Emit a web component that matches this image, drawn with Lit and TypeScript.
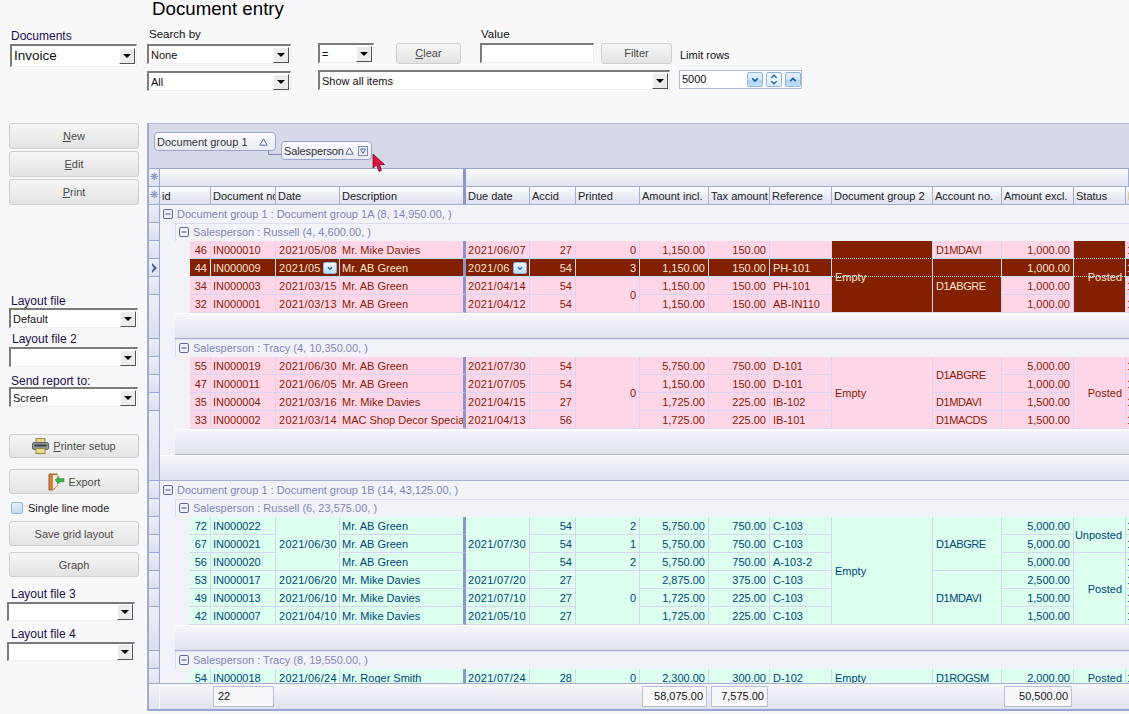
import { LitElement, html, css, svg, nothing } from 'lit';
import { customElement } from 'lit/decorators.js';

type Merged = { t: string; span: number; sel?: boolean };
type Cell = string | Merged | null;
type Sub = { title: string; tone: 'pink' | 'green'; rows: Cell[][]; footer: boolean };
type Group = { title: string; subs: Sub[]; footer: boolean };

const m = (t: string, span: number, sel = false): Merged => ({ t, span, sel });

// columns that are right aligned in the data rows
const RIGHT = new Set([0, 5, 6, 7, 8, 12, 13]);
const SELECTED_ID = '44';

const groups: Group[] = [
  {
    title: 'Document group 1 : Document group 1A (8, 14,950.00, )',
    footer: true,
    subs: [
      {
        title: 'Salesperson : Russell (4, 4,600.00, )',
        tone: 'pink',
        footer: true,
        rows: [
          ['46', 'IN000010', '2021/05/08', 'Mr. Mike Davies', '2021/06/07', '27', '0', '1,150.00', '150.00', '', m('Empty', 4, true), 'D1MDAVI', '1,000.00', m('Posted', 4, true), '1'],
          ['44', 'IN000009', '2021/05', 'Mr. AB Green', '2021/06', '54', '3', '1,150.00', '150.00', 'PH-101', null, m('D1ABGRE', 3, true), '1,000.00', null, '1'],
          ['34', 'IN000003', '2021/03/15', 'Mr. AB Green', '2021/04/14', '54', m('0', 2), '1,150.00', '150.00', 'PH-101', null, null, '1,000.00', null, '1'],
          ['32', 'IN000001', '2021/03/13', 'Mr. AB Green', '2021/04/12', '54', null, '1,150.00', '150.00', 'AB-IN110', null, null, '1,000.00', null, '1'],
        ],
      },
      {
        title: 'Salesperson : Tracy (4, 10,350.00, )',
        tone: 'pink',
        footer: true,
        rows: [
          ['55', 'IN000019', '2021/06/30', 'Mr. AB Green', '2021/07/30', '54', m('0', 4), '5,750.00', '750.00', 'D-101', m('Empty', 4), m('D1ABGRE', 2), '5,000.00', m('Posted', 4), '1'],
          ['47', 'IN000011', '2021/06/05', 'Mr. AB Green', '2021/07/05', '54', null, '1,150.00', '150.00', 'D-101', null, null, '1,000.00', null, '1'],
          ['35', 'IN000004', '2021/03/16', 'Mr. Mike Davies', '2021/04/15', '27', null, '1,725.00', '225.00', 'IB-102', null, 'D1MDAVI', '1,500.00', null, '1'],
          ['33', 'IN000002', '2021/03/14', 'MAC Shop Decor Special', '2021/04/13', '56', null, '1,725.00', '225.00', 'IB-101', null, 'D1MACDS', '1,500.00', null, '1'],
        ],
      },
    ],
  },
  {
    title: 'Document group 1 : Document group 1B (14, 43,125.00, )',
    footer: false,
    subs: [
      {
        title: 'Salesperson : Russell (6, 23,575.00, )',
        tone: 'green',
        footer: true,
        rows: [
          ['72', 'IN000022', m('2021/06/30', 3), 'Mr. AB Green', m('2021/07/30', 3), '54', '2', '5,750.00', '750.00', 'C-103', m('Empty', 6), m('D1ABGRE', 3), '5,000.00', m('Unposted', 2), '1'],
          ['67', 'IN000021', null, 'Mr. AB Green', null, '54', '1', '5,750.00', '750.00', 'C-103', null, null, '5,000.00', null, '1'],
          ['56', 'IN000020', null, 'Mr. AB Green', null, '54', '2', '5,750.00', '750.00', 'A-103-2', null, null, '5,000.00', m('Posted', 4), '1'],
          ['53', 'IN000017', '2021/06/20', 'Mr. Mike Davies', '2021/07/20', '27', m('0', 3), '2,875.00', '375.00', 'C-103', null, m('D1MDAVI', 3), '2,500.00', null, '1'],
          ['49', 'IN000013', '2021/06/10', 'Mr. Mike Davies', '2021/07/10', '27', null, '1,725.00', '225.00', 'C-103', null, null, '1,500.00', null, '1'],
          ['42', 'IN000007', '2021/04/10', 'Mr. Mike Davies', '2021/05/10', '27', null, '1,725.00', '225.00', 'C-103', null, null, '1,500.00', null, '1'],
        ],
      },
      {
        title: 'Salesperson : Tracy (8, 19,550.00, )',
        tone: 'green',
        footer: false,
        rows: [
          ['54', 'IN000018', '2021/06/24', 'Mr. Roger Smith', '2021/07/24', '28', '0', '2,300.00', '300.00', 'D-102', 'Empty', 'D1ROGSM', '2,000.00', 'Posted', '1'],
        ],
      },
    ],
  },
];

const headers = ['id', 'Document no', 'Date', 'Description', 'Due date', 'Accid', 'Printed', 'Amount incl.', 'Tax amount', 'Reference', 'Document group 2', 'Account no.', 'Amount excl.', 'Status', 'Paid'];

const chevronDown = svg`<path d="M3.5 5 L6 7.5 L8.5 5" fill="none" stroke="#1d5fa8" stroke-width="1.5"/>`;
const chevronUp = svg`<path d="M3.5 7.5 L6 5 L8.5 7.5" fill="none" stroke="#1d5fa8" stroke-width="1.5"/>`;

@customElement('app-root')
export class AppRoot extends LitElement {
  static styles = css`
    :host {
      display: block;
      width: 1129px;
      height: 714px;
      overflow: hidden;
      background: #f8f8fb;
      font: 11px/14px 'Liberation Sans', Arial, sans-serif;
      color: #111;
    }
    * { box-sizing: border-box; }

    /* top filter area */
    .top { height: 123px; }
    .title { height: 24px; padding-left: 152px; font-size: 18.7px; line-height: 18px; color: #000; }
    .filters {
      display: grid;
      padding-left: 10px;
      grid-template-columns: 137px 171px 78px 84px 121px 78px 1fr;
      grid-template-rows: 19px 27px 24px;
    }
    .lbl { color: #20104a; font-size: 12px; }
    .filters .lbl { padding-left: 1px; }
    .docs-lbl { grid-column: 1; grid-row: 1; padding-top: 5px; }
    .docs-sel { grid-column: 1; grid-row: 2 / span 2; margin-top: 1px; }
    .search-lbl { grid-column: 2; grid-row: 1; padding: 3px 0 0 2px; font-size: 11.5px; }
    .search-sel { grid-column: 2; grid-row: 2; margin-top: 1px; }
    .all-sel { grid-column: 2; grid-row: 3; margin-top: 1px; }
    .op-sel { grid-column: 3; grid-row: 2; }
    .show-sel { grid-column: 3 / span 4; grid-row: 3; }
    .clear-btn { grid-column: 4; grid-row: 2; width: 65px; height: 21px; padding-bottom: 1px; }
    .value-lbl { grid-column: 5; grid-row: 1; padding: 3px 0 0 1px; font-size: 11.5px; }
    .value-input { grid-column: 5; grid-row: 2; width: 114px; height: 20px; }
    .filter-btn { grid-column: 6; grid-row: 2; width: 71px; height: 21px; padding-bottom: 1px; }
    .limit-lbl { grid-column: 7; grid-row: 2; padding: 5px 0 0 1px; }
    .spin { grid-column: 7; grid-row: 3; }

    .select {
      display: flex;
      align-items: center;
      height: 20px;
      border-style: solid;
      border-width: 2px 1px 1px 2px;
      border-color: #7b7b7b #f0f0f0 #f0f0f0 #7b7b7b;
      background: #fff;
      padding-left: 2px;
      color: #111;
    }
    .select span { flex: 1; overflow: hidden; white-space: nowrap; }
    .select i {
      width: 16px;
      height: 16px;
      margin-right: 1px;
      display: flex;
      align-items: center;
      justify-content: center;
      background: #ececec;
      border-style: solid;
      border-width: 1px;
      border-color: #fff #555 #555 #fff;
    }
    .select i::after {
      content: '';
      border-style: solid;
      border-width: 4px 4px 0;
      border-color: #000 transparent transparent;
    }
    .w-docs { width: 127px; height: 23px; font-size: 13.5px; }
    .w-search { width: 144px; }
    .w-op { width: 56px; }
    .w-show { width: 352px; }
    .w-side { width: 129px; }
    .w-side2 { width: 128px; height: 19px; margin-left: -2px; }

    .btn {
      display: flex;
      align-items: center;
      justify-content: center;
      gap: 4px;
      border: 1px solid #cfcfcf;
      border-radius: 3px;
      background: linear-gradient(#f6f6f6, #e3e3e3);
      color: #4c4c4c;
    }
    .value-input { border-style: solid; border-width: 2px 1px 1px 2px; border-color: #7b7b7b #eee #eee #7b7b7b; background: #fff; }

    .spin {
      display: flex;
      align-items: center;
      width: 123px;
      height: 19px;
      border: 1px solid #b6bddb;
      background: #fff;
      padding-left: 1px;
      gap: 3px;
    }
    .spin span { width: 64px; padding: 0 0 1px 1px; }
    .spin b {
      display: block;
      width: 16px;
      height: 15px;
      border: 1px solid #8db6de;
      border-radius: 2px;
      background: linear-gradient(#e4f1fd 0, #cfe4f9 50%, #b0d4f5 50%, #c4e0f9 100%);
    }
    .spin b.mid { background: linear-gradient(#f4f9fe, #dcebfa); }
    .spin svg { display: block; width: 14px; height: 13px; }

    /* main */
    .main { display: flex; height: 591px; }
    .side { width: 147px; padding-left: 9px; display: flex; flex-direction: column; flex: none; }
    .side .btn { width: 130px; height: 26px; flex: none; }
    .gap-2 { margin-top: 2px; }
    .side .bt24 { height: 24px; margin-top: 27px; }
    .side .bt-export { height: 25px; margin-top: 11px; }
    .side .bt-save { height: 25px; margin-top: 7px; }
    .side .bt-graph { height: 25px; margin-top: 6px; }
    .l1 { margin-top: 89px; padding-left: 2px; }
    .l2 { margin-top: 4px; margin-bottom: 1px; padding-left: 3px; }
    .l3 { margin-top: 7px; margin-bottom: -1px; padding-left: 2px; }
    .l4 { margin-top: 10px; margin-bottom: 1px; padding-left: 2px; }
    .l5 { margin-top: 6px; margin-bottom: 1px; padding-left: 2px; }
    .check { display: flex; align-items: center; gap: 5px; height: 12px; margin: 8px 0 0 2px; color: #222; }
    .check i {
      width: 12px;
      height: 12px;
      border: 1px solid #8fb2d6;
      border-radius: 2px;
      background: linear-gradient(#e6f0fa, #c4dcf4);
    }

    /* grid panel */
    .panel {
      width: 982px;
      height: 588px;
      flex: none;
      border-top: 1px solid #b3b9d4;
      border-left: 2px solid #a3abd0;
      border-bottom: 2px solid #9aa5cf;
      background: #f2f3f9;
      display: flex;
      flex-direction: column;
      overflow: hidden;
    }
    .groupby {
      position: relative;
      height: 44px;
      flex: none;
      display: flex;
      align-items: flex-start;
      gap: 5px;
      padding: 8px 0 0 5px;
      background: #d6d9e8;
    }
    .gb {
      display: flex;
      align-items: center;
      height: 19px;
      border: 1px solid #9aa5cf;
      border-radius: 4px;
      background: linear-gradient(#fbfbfe, #e9ebf5);
      padding-left: 2px;
      color: #333;
    }
    .gb svg { display: block; flex: none; }
    .gb1 { width: 122px; justify-content: space-between; padding-right: 7px; }
    .gb2 { width: 91px; margin-top: 9px; justify-content: space-between; padding-right: 3px; }
    .gb2 > span:first-child { letter-spacing: -.12px; }
    .gb-tools { display: flex; gap: 4px; align-items: center; }
    .link {
      position: absolute;
      left: 119px;
      top: 26px;
      width: 13px;
      height: 5px;
      border-left: 1px solid #7e8ac2;
      border-bottom: 1px solid #7e8ac2;
    }
    .cursor { position: absolute; left: 223px; top: 29px; }

    .bar {
      display: flex;
      flex: none;
      height: 19px;
      border-top: 1px solid #9aa7d3;
    }
    .hrow { height: 18px; border-top: 0; }
    .star {
      width: 11px;
      flex: none;
      border-right: 1px solid #9aa7d3;
      border-bottom: 1px solid #9aa7d3;
      background: linear-gradient(#f5f6fb, #dde0ee);
      color: #7f8ac0;
      font-size: 10px;
      line-height: 16px;
      text-align: center;
      overflow: hidden;
    }
    .band {
      background: linear-gradient(#fcfcfe, #dfe2ee);
      border-right: 1px solid #a3aed6;
      border-bottom: 1px solid #a3aed6;
    }
    .band1 { width: 306px; flex: none; border-right: 3px solid #8b96c5; }
    .band2 { flex: 1; min-width: 0; }
    .cols {
      display: grid;
      grid-template-columns: 51px 65px 64px 126px 64px 46px 64px 69px 61px 62px 101px 69px 72px 52px 60px;
    }
    .hcell {
      height: 18px;
      padding: 0 0 0 2px;
      background: linear-gradient(#fcfcfe, #dce0ee);
      border-right: 1px solid #a3aed6;
      border-bottom: 1px solid #a3aed6;
      line-height: 18px;
      white-space: nowrap;
      overflow: hidden;
      color: #222;
    }
    .hcell.split { border-right: 3px solid #8b96c5; }

    .body { flex: 1; display: flex; min-height: 0; overflow: hidden; }
    .ind { width: 11px; flex: none; }
    .ind div {
      display: flex;
      align-items: center;
      justify-content: center;
      border-right: 1px solid #9aa7d3;
      border-bottom: 1px solid #9aa7d3;
      background: linear-gradient(#eceef6, #dcdfec);
    }
    .content { flex: 1; min-width: 0; }
    .grow { height: 18px; display: flex; align-items: center; gap: 4px; padding-left: 3px; color: #7f87bb; white-space: nowrap; }
    .grow svg { display: block; flex: none; }
    .srow { margin-left: 15px; border-left: 1px solid #dcdcf2; border-top: 1px solid #dcdcf2; height: 18px; padding-bottom: 1px; }
    .rows {
      position: relative;
      margin-left: 30px;
      display: grid;
      grid-template-columns: 21px 65px 64px 126px 64px 46px 64px 69px 61px 62px 101px 69px 72px 52px 60px;
      grid-auto-rows: 18px;
    }
    .cell {
      display: flex;
      align-items: center;
      padding: 0 2px 0 2px;
      border-right: 1px solid #d6d6f2;
      border-bottom: 1px solid #d6d6f2;
      white-space: nowrap;
      overflow: hidden;
      min-width: 0;
    }
    .cell span { flex: 1; min-width: 0; overflow: hidden; }
    .right { justify-content: flex-end; text-align: right; padding-right: 3px; }
    .c2 { padding-left: 3px; letter-spacing: .28px; }
    .c4 { letter-spacing: .28px; }
    .c9, .c10 { padding-left: 3px; }
    .c11 { padding-left: 3px; letter-spacing: -.4px; }
    .c14 { padding-left: 1px; }
    .pink .cell { background: #ffd6e8; color: #8a1a05; }
    .green .cell { background: #dcffee; color: #00467a; }
    .rows .cell.sel { background: #832000; color: #fbe3d6; }
    .rows .cell.active { border-right-color: #fff; }
    .split { border-right: 3px solid #8b96c5; }
    .dd {
      flex: none;
      display: block;
      width: 14px;
      height: 12px;
      border: 1px solid #8fb6dc;
      border-radius: 2px;
      background: linear-gradient(#f2f8fe, #bcd9f5);
    }
    .dd svg { display: block; width: 12px; height: 10px; }
    .focus {
      position: absolute;
      left: 0;
      top: 17px;
      right: 0;
      height: 19px;
      border-top: 1px dotted #9ff0f5;
      border-bottom: 1px dotted #9ff0f5;
      pointer-events: none;
    }
    .foot {
      height: 26px;
      margin-left: 15px;
      background: linear-gradient(#f6f7fb, #dfe2ee);
      border-top: 1px solid #fff;
      border-bottom: 1px solid #a9b0d2;
    }
    .foot.top { margin-left: 0; }

    .sum {
      flex: none;
      height: 26px;
      display: flex;
      border-top: 1px solid #a3abd0;
    }
    .sum-ind { width: 11px; flex: none; background: linear-gradient(#f2f3f9, #dfe2ee); border-right: 1px solid #f8f8fb; }
    .sum .cols { flex: 1; background: linear-gradient(#f8f8fb, #dfe2ee); padding-top: 2px; }
    .tot {
      height: 21px;
      margin: 0 2px;
      border: 1px solid #b9c0dc;
      background: #f8f8fb;
      line-height: 19px;
      padding: 0 3px 0 2px;
      color: #111;
      text-align: right;
    }
    .tot.first { grid-column: 2; text-align: left; padding-left: 4px; }
    .tot.t8 { grid-column: 8; }
    .tot.t9 { grid-column: 9; }
    .tot.t13 { grid-column: 13; }
  `;

  private sel(text: string, cls: string) {
    return html`<div class="select ${cls}"><span>${text}</span><i></i></div>`;
  }

  private expander() {
    return html`<svg width="10" height="10" viewBox="0 0 10 10"><rect x=".5" y=".5" width="9" height="9" rx="1.5" fill="#eef0f8" stroke="#5f6897"/><path d="M2.5 5h5" stroke="#3d4575"/></svg>`;
  }

  private triangle() {
    return html`<svg width="9" height="8" viewBox="0 0 9 8"><path d="M4.5 .8 L8.2 7.2 H.8 Z" fill="none" stroke="#5b67a8"/></svg>`;
  }

  private renderCell(c: Cell, col: number, row: number, rowId: string) {
    if (c === null) return nothing;
    const merged = typeof c === 'object';
    const text = merged ? (c as Merged).t : (c as string);
    const span = merged ? (c as Merged).span : 1;
    const selected = rowId === SELECTED_ID || (merged && (c as Merged).sel);
    const withDrop = rowId === SELECTED_ID && (col === 2 || col === 4);
    const cls = [
      'cell',
      `c${col}`,
      RIGHT.has(col) ? 'right' : '',
      selected ? 'sel' : '',
      col === 3 ? 'split' : '',
      selected && col === 0 ? 'active' : '',
    ].join(' ');
    return html`<div class=${cls} style="grid-column:${col + 1};grid-row:${row + 1} / span ${span}">
      ${withDrop
        ? html`<span>${text}</span><b class="dd"><svg viewBox="0 0 12 12">${chevronDown}</svg></b>`
        : text}
    </div>`;
  }

  private renderSub(s: Sub) {
    const selected = s.rows.some((r) => r[0] === SELECTED_ID);
    return html`
      <div class="grow srow">${this.expander()}<span>${s.title}</span></div>
      <div class="rows ${s.tone}">
        ${s.rows.map((r, ri) => r.map((c, ci) => this.renderCell(c, ci, ri, r[0] as string)))}
        ${selected ? html`<div class="focus"></div>` : nothing}
      </div>
      ${s.footer ? html`<div class="foot"></div>` : nothing}
    `;
  }

  // row selector column, the last row of a block also covers the footers below it
  private indicators() {
    const items: { h: number; id?: string }[] = [];
    for (const g of groups) {
      items.push({ h: 18 });
      for (const s of g.subs) {
        items.push({ h: 18 });
        for (const r of s.rows) items.push({ h: 18, id: r[0] as string });
        if (s.footer) items[items.length - 1].h += 26;
      }
      if (g.footer) items[items.length - 1].h += 26;
    }
    return items.map(
      (i) => html`<div style="height:${i.h}px">
        ${i.id === SELECTED_ID
          ? html`<svg width="7" height="10" viewBox="0 0 7 10"><path d="M1 0 L6 5 L1 10 L1 7.5 L3 5 L1 2.5 Z" fill="#4d5c9e"/></svg>`
          : nothing}
      </div>`
    );
  }

  private renderTop() {
    return html`
      <div class="top">
        <div class="title">Document entry</div>
        <div class="filters">
          <div class="lbl docs-lbl">Documents</div>
          <div class="docs-sel">${this.sel('Invoice', 'w-docs')}</div>
          <div class="search-lbl">Search by</div>
          <div class="search-sel">${this.sel('None', 'w-search')}</div>
          <div class="all-sel">${this.sel('All', 'w-search')}</div>
          <div class="op-sel">${this.sel('=', 'w-op')}</div>
          <div class="show-sel">${this.sel('Show all items', 'w-show')}</div>
          <div class="btn clear-btn"><span><u>C</u>lear</span></div>
          <div class="value-lbl">Value</div>
          <div class="value-input"></div>
          <div class="btn filter-btn">Filter</div>
          <div class="limit-lbl">Limit rows</div>
          <div class="spin">
            <span>5000</span>
            <b><svg viewBox="0 0 12 12">${chevronDown}</svg></b>
            <b class="mid"><svg viewBox="0 0 12 12"><path d="M3.5 4.5 L6 2 L8.5 4.5 M3.5 7.5 L6 10 L8.5 7.5" fill="none" stroke="#1d5fa8" stroke-width="1.3"/></svg></b>
            <b><svg viewBox="0 0 12 12">${chevronUp}</svg></b>
          </div>
        </div>
      </div>
    `;
  }

  private renderSide() {
    return html`
      <div class="side">
        <div class="btn"><span><u>N</u>ew</span></div>
        <div class="btn gap-2"><span><u>E</u>dit</span></div>
        <div class="btn gap-2"><span><u>P</u>rint</span></div>
        <div class="lbl l1">Layout file</div>
        ${this.sel('Default', 'w-side')}
        <div class="lbl l2">Layout file 2</div>
        ${this.sel('', 'w-side')}
        <div class="lbl l3">Send report to:</div>
        ${this.sel('Screen', 'w-side')}
        <div class="btn bt24">
          <svg width="17" height="16" viewBox="0 0 17 16">
            <rect x="4" y="0.5" width="9" height="5" fill="#e4d48c" stroke="#9a8b4a"/>
            <rect x="0.5" y="4.5" width="16" height="7" rx="1.5" fill="#8f959c" stroke="#5f646a"/>
            <rect x="2.5" y="6.5" width="12" height="2" fill="#3e4348"/>
            <rect x="4" y="10.5" width="9" height="5" fill="#e8d890" stroke="#9a8b4a"/>
          </svg>
          <span><u>P</u>rinter setup</span>
        </div>
        <div class="btn bt-export">
          <svg width="17" height="18" viewBox="0 0 17 18">
            <path d="M1 1 H9 V13 L5 17 H1 Z" fill="#d9803a" stroke="#9c5a2a"/>
            <path d="M5 2 H9 V13 L5 16.5 Z" fill="#f3ece2"/>
            <path d="M7 7 L11 3.5 V5.5 H16 V9 H11 V11 Z" fill="#3fb54a" stroke="#2c8f3a" stroke-width=".5"/>
          </svg>
          <span>Export</span>
        </div>
        <div class="check"><i></i><span>Single line mode</span></div>
        <div class="btn bt-save">Save grid layout</div>
        <div class="btn bt-graph">Graph</div>
        <div class="lbl l4">Layout file 3</div>
        ${this.sel('', 'w-side2')}
        <div class="lbl l5">Layout file 4</div>
        ${this.sel('', 'w-side2')}
      </div>
    `;
  }

  private renderPanel() {
    return html`
      <div class="panel">
        <div class="groupby">
          <div class="gb gb1"><span>Document group 1</span>${this.triangle()}</div>
          <div class="gb gb2">
            <span>Salesperson</span>
            <span class="gb-tools">
              ${this.triangle()}
              <svg width="10" height="10" viewBox="0 0 10 10"><rect x=".5" y=".5" width="9" height="9" fill="#eef0f8" stroke="#7e8ac2"/><path d="M2.5 3 H7.5 L5 7.5 Z" fill="none" stroke="#5b67a8"/></svg>
            </span>
          </div>
          <div class="link"></div>
          <svg class="cursor" width="15" height="20" viewBox="0 0 15 20">
            <path d="M1 1 L1 15 L4.5 12 L7 18.5 L9.5 17.5 L7.5 11.5 L12.5 11.5 Z" fill="#e3123f" stroke="#5a0a1e" stroke-width=".7"/>
          </svg>
        </div>
        <div class="bar">
          <div class="star">❋</div>
          <div class="band band1"></div>
          <div class="band band2"></div>
        </div>
        <div class="bar hrow">
          <div class="star">❋</div>
          <div class="cols">
            ${headers.map((h, i) => html`<div class="hcell ${i === 3 ? 'split' : ''}">${h}</div>`)}
          </div>
        </div>
        <div class="body">
          <div class="ind">${this.indicators()}</div>
          <div class="content">
            ${groups.map(
              (g) => html`
                <div class="grow">${this.expander()}<span>${g.title}</span></div>
                ${g.subs.map((s) => this.renderSub(s))}
                ${g.footer ? html`<div class="foot top"></div>` : nothing}
              `
            )}
          </div>
        </div>
        <div class="sum">
          <div class="sum-ind"></div>
          <div class="cols">
            <div class="tot first">22</div>
            <div class="tot t8">58,075.00</div>
            <div class="tot t9">7,575.00</div>
            <div class="tot t13">50,500.00</div>
          </div>
        </div>
      </div>
    `;
  }

  render() {
    return html`
      ${this.renderTop()}
      <div class="main">${this.renderSide()}${this.renderPanel()}</div>
    `;
  }
}
